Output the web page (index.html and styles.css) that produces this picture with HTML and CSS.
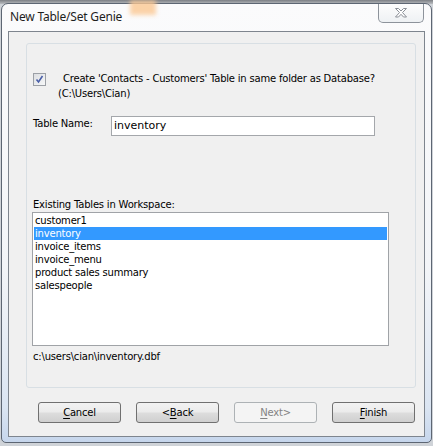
FILE: index.html
```html
<!DOCTYPE html>
<html>
<head>
<meta charset="utf-8">
<link rel="stylesheet" href="styles.css">
</head>
<body>
<div class="screen">
  <div class="bg-strip"></div>
  <div class="bg-glow"></div>
  <div class="window">
    <div class="titlebar">
      <span class="title">New Table/Set Genie</span>
      <div class="close">
        <svg width="18" height="12" viewBox="0 0 18 12">
          <path d="M3.5 1.5h3l2.5 2.5 2.5-2.5h3l-4 4 4 4.5h-3l-2.5-2.7-2.5 2.7h-3l4-4.5z" fill="#fff" stroke="#8a8f96" stroke-width="1" stroke-linejoin="round"/>
        </svg>
      </div>
    </div>
    <div class="client">
      <div class="group">
        <div class="row-check">
          <span class="checkbox">
            <svg width="9" height="9" viewBox="0 0 9 9"><path d="M1.5 4.5l2 2.5 4-6" fill="none" stroke="#4a5fa8" stroke-width="1.6"/></svg>
          </span>
          <div class="check-label">
            <div class="first">Create 'Contacts - Customers' Table in same folder as Database?</div>
            <div>(C:\Users\Cian)</div>
          </div>
        </div>
        <div class="row-name">
          <span class="name-label">Table Name:</span>
          <div class="input">inventory</div>
        </div>
        <div class="list-label">Existing Tables in Workspace:</div>
        <div class="listbox">
          <div class="item">customer1</div>
          <div class="item selected">inventory</div>
          <div class="item">invoice_items</div>
          <div class="item">invoice_menu</div>
          <div class="item">product sales summary</div>
          <div class="item">salespeople</div>
        </div>
        <div class="path">c:\users\cian\inventory.dbf</div>
      </div>
      <div class="buttons">
        <button class="btn"><u>C</u>ancel</button>
        <button class="btn">&lt;<u>B</u>ack</button>
        <button class="btn disabled"><u>N</u>ext&gt;</button>
        <button class="btn"><u>F</u>inish</button>
      </div>
    </div>
  </div>
</div>
</body>
</html>
```
FILE: styles.css
```css
* { box-sizing: border-box; }
html, body { margin: 0; padding: 0; }
body {
  width: 433px;
  height: 446px;
  overflow: hidden;
  font-family: "DejaVu Sans", sans-serif;
  font-size: 10px;
  letter-spacing: -0.2px;
  color: #000;
}
.screen {
  position: relative;
  width: 433px;
  height: 446px;
  background: #cfd3d8;
  padding: 3px 0 0 1px;
}
.bg-strip {
  position: absolute;
  left: 0; top: 0;
  width: 433px; height: 4px;
  background: linear-gradient(#7c7f84, #b9bcc0);
}
.bg-glow {
  position: absolute;
  left: 130px; top: 0;
  width: 26px; height: 15px;
  background: #fbc893;
  filter: blur(2px);
  z-index: 2;
  opacity: 0.8;
}
.window {
  position: relative;
  width: 431px;
  height: 440px;
  border: 1px solid #5d6673;
  border-radius: 7px 7px 5px 5px;
  background: linear-gradient(#fbfbfc 0%, #f3f5f8 60%, #dbe5f2 92%, #c6d6ec 100%);
  padding: 0 6px 5px 6px;
  display: flex;
  flex-direction: column;
  z-index: 1;
}
.titlebar {
  height: 27px;
  display: flex;
  justify-content: space-between;
  align-items: flex-start;
}
.title {
  font-family: "Noto Sans", sans-serif;
  font-size: 12px;
  letter-spacing: -0.2px;
  line-height: 16px;
  margin-top: 5px;
  margin-left: 2px;
  color: #1e1e1e;
}
.close {
  width: 46px;
  height: 19px;
  margin-right: 1px;
  border: 1px solid #8d939b;
  border-top: none;
  border-radius: 0 0 5px 5px;
  background: linear-gradient(#fdfdfd, #eef1f4);
  display: flex;
  align-items: center;
  justify-content: center;
}
.client {
  width: 417px;
  height: 407px;
  border: 1px solid #7e858e;
  background: #f0f0f0;
  padding: 11px 0 0 17px;
}
.group {
  width: 390px;
  height: 345px;
  border: 1px solid #d8dfe4;
  border-radius: 3px;
  padding: 27px 0 0 6px;
}
.row-check {
  display: flex;
  height: 30px;
  line-height: 15px;
}
.checkbox {
  width: 13px;
  height: 13px;
  margin-top: 2px;
  border: 1px solid #9ca0a6;
  background: linear-gradient(135deg, #dcdee1, #f7f8f9);
  display: flex;
  align-items: center;
  justify-content: center;
}
.check-label {
  margin-left: 12px;
}
.check-label .first {
  text-indent: 5px;
}
.row-name {
  display: flex;
  margin-top: 15px;
  height: 20px;
}
.name-label {
  width: 78px;
  line-height: 15px;
}
.input {
  width: 264px;
  height: 20px;
  border: 1px solid #a4a7ab;
  background: #fff;
  padding-left: 2px;
  line-height: 18px;
  font-size: 11px;
  letter-spacing: 0;
}
.list-label {
  margin-top: 62px;
  line-height: 14px;
}
.listbox {
  margin-left: -1px;
  width: 357px;
  height: 134px;
  border: 1px solid #a0a3a7;
  background: #fff;
  padding: 1px 1px 0 1px;
}
.item {
  height: 13px;
  line-height: 13px;
  padding-left: 1px;
}
.item.selected {
  background: #3399ff;
  color: #fff;
}
.path {
  margin-top: 3px;
  line-height: 15px;
}
.buttons {
  display: flex;
  gap: 15px;
  margin-top: 14px;
  padding-left: 12px;
}
.btn {
  width: 83px;
  height: 21px;
  border: 1px solid #707070;
  border-radius: 3px;
  background: linear-gradient(#f2f2f2 0%, #ebebeb 48%, #dddddd 52%, #cfcfcf 100%);
  font-family: "DejaVu Sans", sans-serif;
  font-size: 10px;
  letter-spacing: -0.2px;
  color: #000;
  padding: 0;
  line-height: 19px;
}
.btn u { text-underline-offset: 2px; }
.btn.disabled {
  border-color: #adb2b5;
  background: #f4f4f4;
  color: #838383;
}
```
